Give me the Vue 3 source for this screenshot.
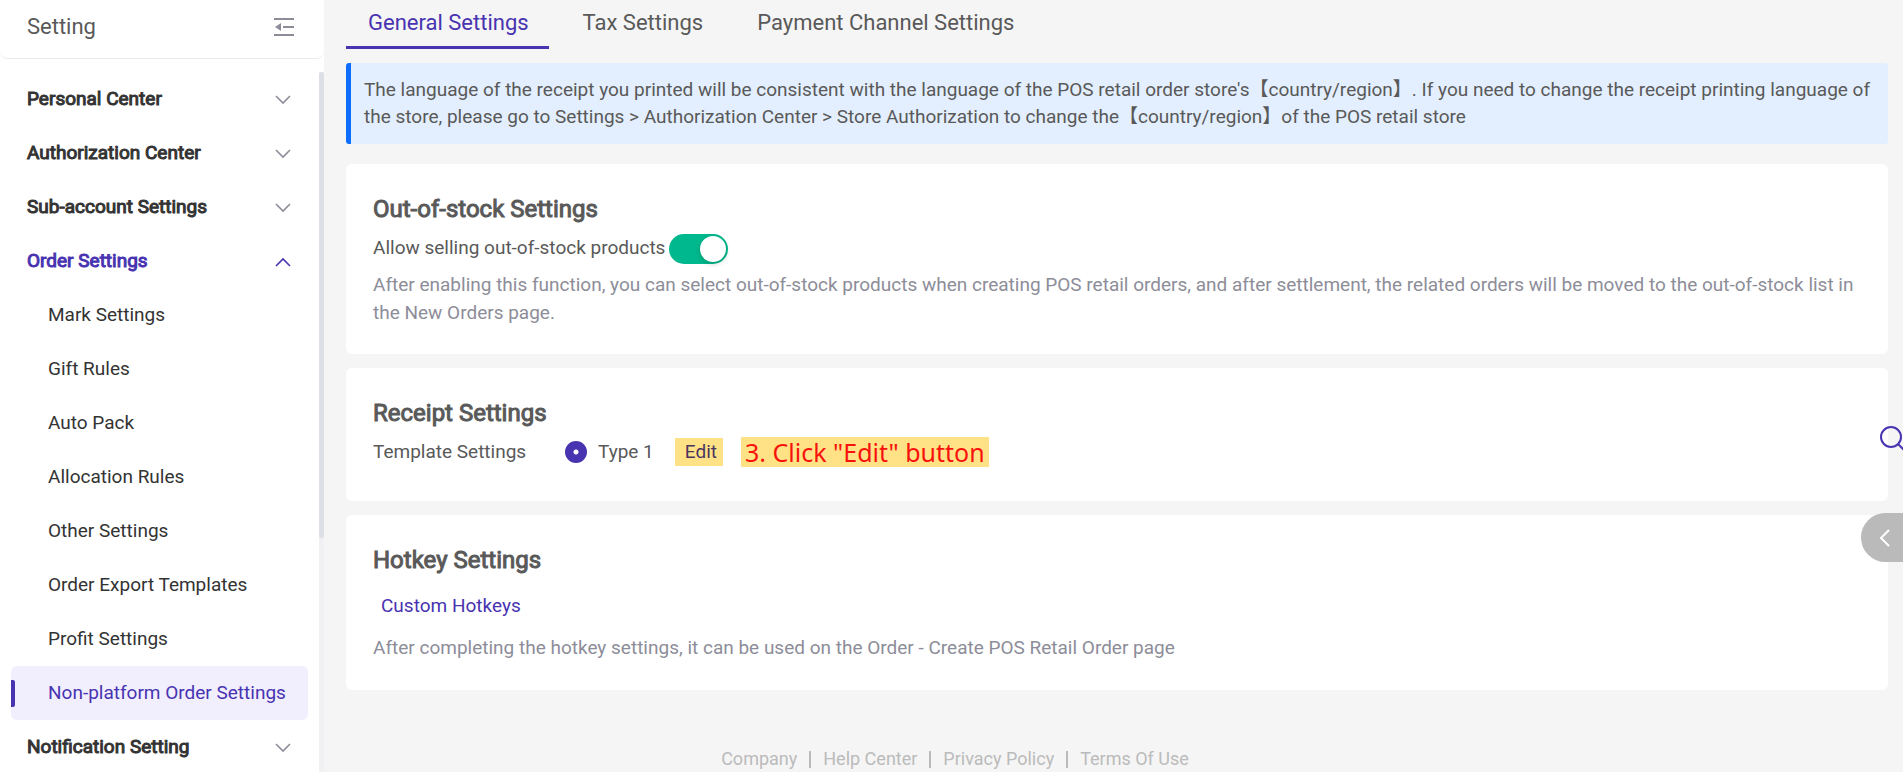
<template>
  <div class="layout">
    <aside class="sidebar">
      <div class="sidebar-header">
        <span>Setting</span>
        <button class="icon-btn" aria-label="Collapse menu">
          <svg width="20" height="18" viewBox="0 0 20 18">
            <path d="M0 1h20M9 9h11M0 17h20" stroke="#8d8d99" stroke-width="2" fill="none" />
            <path d="M1 9l6-4v8z" fill="#8d8d99" />
          </svg>
        </button>
      </div>
      <div class="sidebar-body">
        <nav class="menu">
          <template v-for="group in menu" :key="group.name">
            <button class="menu-group" :class="{ open: group.children }">
              <span>{{ group.name }}</span>
              <svg class="chevron" width="16" height="10" viewBox="0 0 16 10">
                <path d="M1 1l7 7 7-7" fill="none" stroke="currentColor" stroke-width="1.6" />
              </svg>
            </button>
            <a
              v-for="child in group.children"
              :key="child"
              href="#"
              class="menu-item"
              :class="{ active: child === activeItem }"
              @click.prevent="activeItem = child"
            >{{ child }}</a>
          </template>
        </nav>
        <div class="rail"><div class="thumb"></div></div>
      </div>
    </aside>

    <main class="content">
      <div class="tabs">
        <button
          v-for="tab in tabs"
          :key="tab"
          class="tab"
          :class="{ active: tab === activeTab }"
          @click="activeTab = tab"
        >{{ tab }}</button>
      </div>

      <div class="notice">
        The language of the receipt you printed will be consistent with the language of the POS retail order store's【country/region】. If you need to change the receipt printing language of the store, please go to Settings &gt; Authorization Center &gt; Store Authorization to change the【country/region】of the POS retail store
      </div>

      <section class="card">
        <h2>Out-of-stock Settings</h2>
        <div class="row">
          <label for="oos">Allow selling out-of-stock products</label>
          <input id="oos" v-model="allowOutOfStock" type="checkbox" class="switch" />
        </div>
        <p class="desc">
          After enabling this function, you can select out-of-stock products when creating POS retail orders, and after settlement, the related orders will be moved to the out-of-stock list in the New Orders page.
        </p>
      </section>

      <section class="card receipt">
        <h2>Receipt Settings</h2>
        <div class="row">
          <span class="row-title">Template Settings</span>
          <input id="type1" v-model="template" type="radio" name="template" value="1" class="radio" />
          <label for="type1" class="radio-label">Type 1</label>
          <button class="edit">Edit</button>
          <span class="step">3. Click "Edit" button</span>
        </div>
      </section>

      <section class="card hotkey">
        <h2>Hotkey Settings</h2>
        <a href="#" class="link">Custom Hotkeys</a>
        <p class="desc">After completing the hotkey settings, it can be used on the Order - Create POS Retail Order page</p>
      </section>

      <footer class="footer">
        <a v-for="link in links" :key="link" href="#">{{ link }}</a>
      </footer>
    </main>

    <button class="search" aria-label="Search">
      <svg width="28" height="28" viewBox="0 0 28 28">
        <path d="M11 1a10 10 0 1 0 0 20 10 10 0 0 0 0-20zM18 18l8 8" fill="none" stroke="#4833b1" stroke-width="2" />
      </svg>
    </button>
    <button class="drawer" aria-label="Open panel">
      <svg width="12" height="18" viewBox="0 0 12 18">
        <path d="M10 1L2 9l8 8" fill="none" stroke="#fff" stroke-width="2" />
      </svg>
    </button>
  </div>
</template>

<script setup>
import { ref } from 'vue';

const menu = [
  { name: 'Personal Center' },
  { name: 'Authorization Center' },
  { name: 'Sub-account Settings' },
  {
    name: 'Order Settings',
    children: [
      'Mark Settings',
      'Gift Rules',
      'Auto Pack',
      'Allocation Rules',
      'Other Settings',
      'Order Export Templates',
      'Profit Settings',
      'Non-platform Order Settings',
    ],
  },
  { name: 'Notification Setting' },
];
const tabs = ['General Settings', 'Tax Settings', 'Payment Channel Settings'];
const links = ['Company', 'Help Center', 'Privacy Policy', 'Terms Of Use'];

const activeItem = ref('Non-platform Order Settings');
const activeTab = ref('General Settings');
const allowOutOfStock = ref(true);
const template = ref('1');
</script>

<style>
body {
  margin: 0;
  background: #f5f5f5;
}
</style>

<style scoped>
.layout {
  display: flex;
  height: 100vh;
  overflow: hidden;
  position: relative;
  background: #f5f5f5;
  color: #595959;
  font-family: Roboto, "Noto Sans CJK SC", sans-serif;
  font-size: 19px;
  line-height: 28px;
}

button {
  font: inherit;
  color: inherit;
  background: none;
  border: none;
  padding: 0;
  cursor: pointer;
}

a {
  color: inherit;
  text-decoration: none;
}

svg {
  display: block;
}

.sidebar {
  width: 324px;
  flex-shrink: 0;
  display: flex;
  flex-direction: column;
  background: #fff;
}

.sidebar-header {
  box-sizing: border-box;
  height: 59px;
  flex-shrink: 0;
  display: flex;
  align-items: center;
  justify-content: space-between;
  padding: 0 30px 5px 27px;
  font-size: 22px;
  border-bottom: 1px solid #ebebeb;
  border-radius: 0 0 8px 8px;
}

.sidebar-body {
  flex: 1;
  min-height: 0;
  display: flex;
  padding-top: 13px;
}

.menu {
  flex: 1;
  padding: 0 11px;
  overflow: hidden;
}

.menu-group {
  width: 100%;
  height: 54px;
  display: flex;
  align-items: center;
  justify-content: space-between;
  padding: 0 17px 0 16px;
  color: #333;
}

.menu-group span,
h2 {
  -webkit-text-stroke: 1px currentColor;
}

.chevron {
  margin-top: 2px;
  color: #8d8d99;
}

.menu-group.open,
.open .chevron {
  color: #4833b1;
}

.open .chevron {
  transform: rotate(180deg);
}

.menu-item {
  display: flex;
  align-items: center;
  height: 54px;
  padding-left: 37px;
  border-radius: 6px;
  color: #333;
  white-space: nowrap;
}

.menu-item.active {
  background: #f1eefe;
  color: #4833b1;
  padding-left: 0;
}

.menu-item.active::before {
  content: "";
  width: 4px;
  height: 27px;
  margin-right: 33px;
  border-radius: 0 2px 2px 0;
  background: #4833b1;
}

.rail {
  width: 5px;
  background: #f1f1f3;
}

.thumb {
  height: 66.6%;
  border-radius: 3px;
  background: #dcdfe6;
}

.content {
  flex: 1;
  min-width: 0;
  padding: 0 15px 0 22px;
}

.tabs {
  display: flex;
  gap: 12px;
  margin-bottom: 14px;
}

.tab {
  padding: 9px 20px 9px 22px;
  border-bottom: 3px solid transparent;
  font-size: 22px;
  line-height: 28px;
}

.tab.active {
  color: #4833b1;
  border-bottom-color: #4833b1;
}

.notice {
  padding: 13px 8px 14px 13px;
  border-left: 5px solid #0d6efd;
  border-radius: 3px;
  background: #e3effe;
  line-height: 27px;
  margin-bottom: 20px;
}

.card {
  background: #fff;
  border-radius: 6px;
  padding: 30px 26px 27px 27px;
  margin-bottom: 14px;
}

h2 {
  margin: 0;
  font-size: 24px;
  font-weight: 400;
  line-height: 30px;
}

.row {
  display: flex;
  align-items: flex-start;
  margin: 10px 0 7px;
}

.switch {
  appearance: none;
  box-sizing: border-box;
  width: 59px;
  height: 30px;
  margin: 0 0 0 4px;
  padding: 2px;
  border-radius: 15px;
  background: #c0c4cc;
}

.switch::before {
  content: "";
  display: block;
  width: 26px;
  height: 26px;
  border-radius: 50%;
  background: #fff;
  box-shadow: 0 2px 5px rgba(0, 35, 11, 0.2);
}

.switch:checked {
  background: #00b88d;
}

.switch:checked::before {
  margin-left: auto;
}

.desc {
  margin: 0;
  color: #8d8d99;
}

.receipt {
  padding-bottom: 34px;
}

.receipt .row {
  align-items: center;
  margin: 9px 0 0;
}

.row-title {
  width: 192px;
}

.radio {
  appearance: none;
  width: 22px;
  height: 22px;
  margin: 0;
  border-radius: 50%;
  background: radial-gradient(circle, #fff 2px, #4833b1 3px);
}

.radio-label {
  margin-left: 11px;
}

.edit {
  padding: 0 6px 0 10px;
  margin-left: 21px;
  background: #ffe285;
  color: #4a3560;
}

.step {
  padding: 0 4px;
  margin-left: 18px;
  background: #ffe285;
  color: #f8120d;
  font-family: "Noto Sans", sans-serif;
  font-size: 25px;
  line-height: 30px;
}

.hotkey {
  padding-bottom: 28px;
}

.link {
  display: inline-block;
  margin: 17px 8px 14px;
  color: #4833b1;
}

.footer {
  display: flex;
  justify-content: center;
  margin-top: 55px;
  padding-right: 324px;
  font-size: 18px;
  color: #bbb;
}

.footer a {
  display: flex;
  align-items: center;
}

.footer a + a::before {
  content: "";
  width: 2px;
  height: 17px;
  margin: 0 12px;
  background: #bbb;
}

/* floating tools on the right edge */
.search,
.drawer {
  position: absolute;
  right: 0;
}

.search {
  top: 426px;
  right: -5px;
}

.drawer {
  top: 513px;
  width: 42px;
  height: 49px;
  padding-left: 18px;
  border-radius: 25px 0 0 25px;
  background: #bababa;
}
</style>
